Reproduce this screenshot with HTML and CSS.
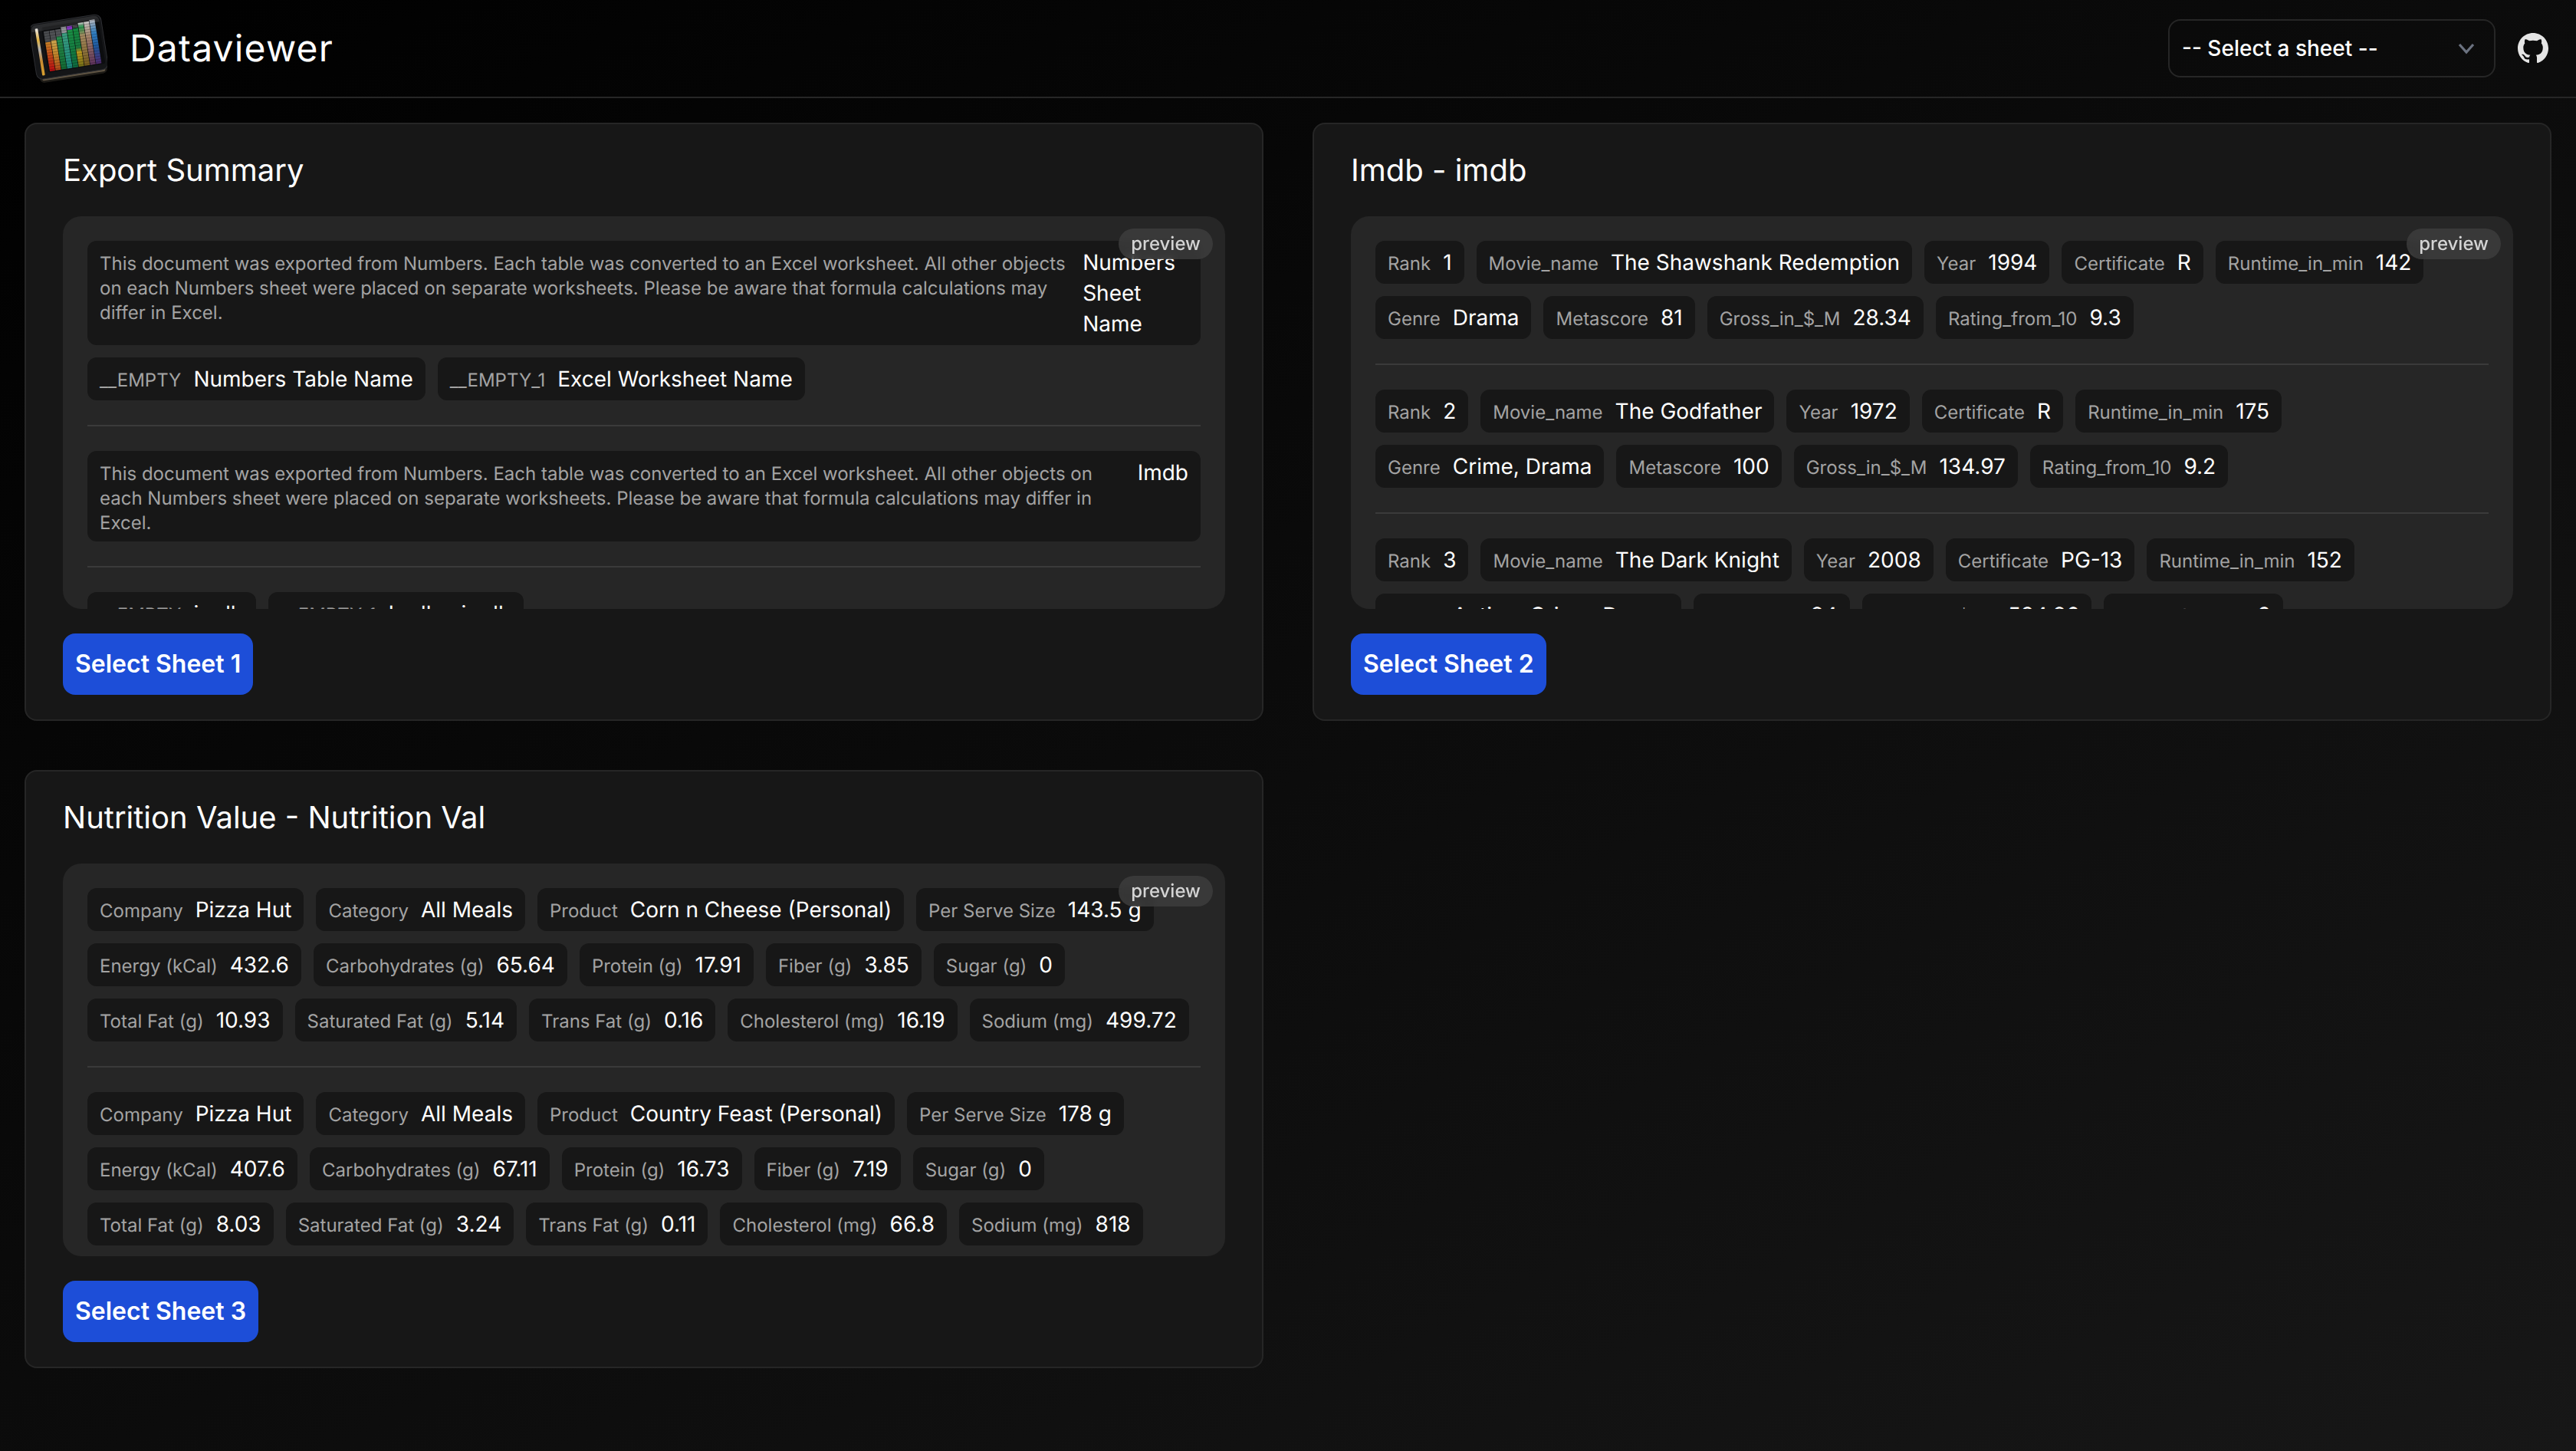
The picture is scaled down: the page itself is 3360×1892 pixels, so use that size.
FILE: index.html
```html
<!DOCTYPE html>
<html lang="en">
<head>
    <meta charset="UTF-8">
    <meta name="viewport" content="width=device-width, initial-scale=1.0">
    <title>Dataviewer</title>
    <link rel="stylesheet" href="styles.css">
</head>
<body>
    <header class="topbar">
        <div class="brand">
            <svg class="brand-logo" viewBox="30 20 300 280" aria-hidden="true">
                <defs>
                    <linearGradient id="c1" x1="0" y1="0" x2="0" y2="1"><stop offset="0" stop-color="#e8962c"/><stop offset=".45" stop-color="#e2561c"/><stop offset="1" stop-color="#d80f14"/></linearGradient>
                    <linearGradient id="c2" x1="0" y1="0" x2="0" y2="1"><stop offset="0" stop-color="#eec05a"/><stop offset=".5" stop-color="#e09a30"/><stop offset="1" stop-color="#c9501c"/></linearGradient>
                    <linearGradient id="c3" x1="0" y1="0" x2="0" y2="1"><stop offset="0" stop-color="#2fa55a"/><stop offset="1" stop-color="#157a3c"/></linearGradient>
                    <linearGradient id="c4" x1="0" y1="0" x2="0" y2="1"><stop offset="0" stop-color="#45b894"/><stop offset="1" stop-color="#1c9c8c"/></linearGradient>
                    <linearGradient id="c5" x1="0" y1="0" x2="0" y2="1"><stop offset="0" stop-color="#9a3fe0"/><stop offset=".08" stop-color="#9a3fe0"/><stop offset=".1" stop-color="#1fa850"/><stop offset="1" stop-color="#107a48"/></linearGradient>
                    <linearGradient id="c6" x1="0" y1="0" x2="0" y2="1"><stop offset="0" stop-color="#16a24a"/><stop offset=".5" stop-color="#1d8a48"/><stop offset=".62" stop-color="#d8b024"/><stop offset="1" stop-color="#87801c"/></linearGradient>
                    <linearGradient id="c7" x1="0" y1="0" x2="0" y2="1"><stop offset="0" stop-color="#d8d8d8"/><stop offset=".1" stop-color="#2eb05c"/><stop offset=".3" stop-color="#c0a070"/><stop offset="1" stop-color="#8a6a20"/></linearGradient>
                    <linearGradient id="c8" x1="0" y1="0" x2="0" y2="1"><stop offset="0" stop-color="#e0e0e0"/><stop offset=".35" stop-color="#c09878"/><stop offset="1" stop-color="#6c3a6c"/></linearGradient>
                    <linearGradient id="c9" x1="0" y1="0" x2="0" y2="1"><stop offset="0" stop-color="#c8ccd4"/><stop offset=".3" stop-color="#3a94e0"/><stop offset=".6" stop-color="#2468b8"/><stop offset="1" stop-color="#5c3080"/></linearGradient>
                    <linearGradient id="spine" x1="0" y1="0" x2="0" y2="1"><stop offset="0" stop-color="#e8e8e8"/><stop offset=".25" stop-color="#e0b040"/><stop offset=".45" stop-color="#b0b0b0"/><stop offset=".7" stop-color="#c88a30"/><stop offset="1" stop-color="#d8a030"/></linearGradient>
                    <pattern id="cells" width="4" height="11" patternUnits="userSpaceOnUse"><rect width="4" height="11" fill="#000" fill-opacity=".14"/><rect y="9" width="4" height="2" fill="#000" fill-opacity=".35"/></pattern>
                </defs>
                <g transform="rotate(-9 180 160)">
                    <rect x="48" y="225" width="268" height="52" rx="18" fill="#1c1a16"/>
                    <rect x="58" y="245" width="250" height="24" rx="6" fill="#5f5443"/>
                    <rect x="38" y="44" width="284" height="218" rx="24" fill="#141517" stroke="#2e2f33" stroke-width="3"/>
                    <rect x="86" y="60" width="226" height="180" rx="8" fill="#0c0d0f"/>
                    <rect x="60" y="62" width="11" height="186" rx="3" fill="url(#spine)"/>
                    <rect x="92" y="78" width="21" height="44" fill="#55575b"/>
                    <rect x="92" y="122" width="21" height="114" fill="url(#c1)"/>
                    <rect x="115" y="78" width="21" height="40" fill="#5c5e62"/>
                    <rect x="115" y="118" width="21" height="118" fill="url(#c2)"/>
                    <rect x="138" y="78" width="21" height="28" fill="#606266"/>
                    <rect x="138" y="106" width="21" height="130" fill="url(#c3)"/>
                    <rect x="161" y="72" width="21" height="24" fill="#a8aab0"/>
                    <rect x="161" y="96" width="21" height="140" fill="url(#c4)"/>
                    <rect x="184" y="72" width="21" height="164" fill="url(#c5)"/>
                    <rect x="207" y="72" width="21" height="10" fill="#55575b"/>
                    <rect x="207" y="84" width="21" height="152" fill="url(#c6)"/>
                    <rect x="230" y="66" width="21" height="170" fill="url(#c7)"/>
                    <rect x="253" y="66" width="21" height="170" fill="url(#c8)"/>
                    <rect x="276" y="62" width="21" height="174" fill="url(#c9)"/>
                    <rect x="92" y="62" width="205" height="174" fill="url(#cells)"/>
                    <path d="M46 66a18 18 0 0 1 18-18h232a18 18 0 0 1 18 18v8H46z" fill="#fff" fill-opacity=".1"/>
                </g>
            </svg>
            <h1 class="brand-name">Dataviewer</h1>
        </div>
        <div class="topbar-right">
            <div class="sheet-select">
                <select>
                    <option>-- Select a sheet --</option>
                </select>
                <svg class="sheet-select-arrow" viewBox="0 0 24 16" aria-hidden="true">
                    <path d="M3 3l9 10 9-10" fill="none" stroke="#6b7280" stroke-width="3.2"/>
                </svg>
            </div>
            <a class="github-link" href="#" aria-label="GitHub">
                <svg viewBox="0 0 16 16" aria-hidden="true">
                    <path fill="#e5e5e5" d="M8 0C3.58 0 0 3.58 0 8c0 3.54 2.29 6.53 5.47 7.59.4.07.55-.17.55-.38 0-.19-.01-.82-.01-1.49-2.01.37-2.53-.49-2.69-.94-.09-.23-.48-.94-.82-1.13-.28-.15-.68-.52-.01-.53.63-.01 1.08.58 1.23.82.72 1.21 1.87.87 2.33.66.07-.52.28-.87.51-1.07-1.78-.2-3.64-.89-3.64-3.95 0-.87.31-1.59.82-2.15-.08-.2-.36-1.02.08-2.12 0 0 .67-.21 2.2.82.64-.18 1.32-.27 2-.27.68 0 1.36.09 2 .27 1.53-1.04 2.2-.82 2.2-.82.44 1.1.16 1.92.08 2.12.51.56.82 1.27.82 2.15 0 3.07-1.87 3.75-3.65 3.95.29.25.54.73.54 1.48 0 1.07-.01 1.93-.01 2.2 0 .21.15.46.55.38A8.013 8.013 0 0016 8c0-4.42-3.58-8-8-8z"/>
                </svg>
            </a>
        </div>
    </header>

    <main class="sheet-grid">
        <section class="sheet-card">
            <h2 class="sheet-title">Export Summary</h2>
            <div class="preview">
                <span class="preview-tag">preview</span>
                <div class="record">
                    <div class="field"><span class="field-label">This document was exported from Numbers. Each table was converted to an Excel worksheet. All other objects on each Numbers sheet were placed on separate worksheets. Please be aware that formula calculations may differ in Excel.</span><span class="field-value">Numbers Sheet Name</span></div>
                    <div class="field"><span class="field-label">__EMPTY</span><span class="field-value">Numbers Table Name</span></div>
                    <div class="field"><span class="field-label">__EMPTY_1</span><span class="field-value">Excel Worksheet Name</span></div>
                </div>
                <div class="record">
                    <div class="field"><span class="field-label">This document was exported from Numbers. Each table was converted to an Excel worksheet. All other objects on each Numbers sheet were placed on separate worksheets. Please be aware that formula calculations may differ in Excel.</span><span class="field-value">Imdb</span></div>
                </div>
                <div class="record">
                    <div class="field"><span class="field-label">__EMPTY</span><span class="field-value">imdb</span></div>
                    <div class="field"><span class="field-label">__EMPTY_1</span><span class="field-value">Imdb - imdb</span></div>
                </div>
            </div>
            <button class="select-btn">Select Sheet 1</button>
        </section>

        <section class="sheet-card">
            <h2 class="sheet-title">Imdb - imdb</h2>
            <div class="preview">
                <span class="preview-tag">preview</span>
                <div class="record">
                    <div class="field"><span class="field-label">Rank</span><span class="field-value">1</span></div>
                    <div class="field"><span class="field-label">Movie_name</span><span class="field-value">The Shawshank Redemption</span></div>
                    <div class="field"><span class="field-label">Year</span><span class="field-value">1994</span></div>
                    <div class="field"><span class="field-label">Certificate</span><span class="field-value">R</span></div>
                    <div class="field"><span class="field-label">Runtime_in_min</span><span class="field-value">142</span></div>
                    <div class="field"><span class="field-label">Genre</span><span class="field-value">Drama</span></div>
                    <div class="field"><span class="field-label">Metascore</span><span class="field-value">81</span></div>
                    <div class="field"><span class="field-label">Gross_in_$_M</span><span class="field-value">28.34</span></div>
                    <div class="field"><span class="field-label">Rating_from_10</span><span class="field-value">9.3</span></div>
                </div>
                <div class="record">
                    <div class="field"><span class="field-label">Rank</span><span class="field-value">2</span></div>
                    <div class="field"><span class="field-label">Movie_name</span><span class="field-value">The Godfather</span></div>
                    <div class="field"><span class="field-label">Year</span><span class="field-value">1972</span></div>
                    <div class="field"><span class="field-label">Certificate</span><span class="field-value">R</span></div>
                    <div class="field"><span class="field-label">Runtime_in_min</span><span class="field-value">175</span></div>
                    <div class="field"><span class="field-label">Genre</span><span class="field-value">Crime, Drama</span></div>
                    <div class="field"><span class="field-label">Metascore</span><span class="field-value">100</span></div>
                    <div class="field"><span class="field-label">Gross_in_$_M</span><span class="field-value">134.97</span></div>
                    <div class="field"><span class="field-label">Rating_from_10</span><span class="field-value">9.2</span></div>
                </div>
                <div class="record">
                    <div class="field"><span class="field-label">Rank</span><span class="field-value">3</span></div>
                    <div class="field"><span class="field-label">Movie_name</span><span class="field-value">The Dark Knight</span></div>
                    <div class="field"><span class="field-label">Year</span><span class="field-value">2008</span></div>
                    <div class="field"><span class="field-label">Certificate</span><span class="field-value">PG-13</span></div>
                    <div class="field"><span class="field-label">Runtime_in_min</span><span class="field-value">152</span></div>
                    <div class="field"><span class="field-label">Genre</span><span class="field-value">Action, Crime, Drama</span></div>
                    <div class="field"><span class="field-label">Metascore</span><span class="field-value">84</span></div>
                    <div class="field"><span class="field-label">Gross_in_$_M</span><span class="field-value">534.86</span></div>
                    <div class="field"><span class="field-label">Rating_from_10</span><span class="field-value">9</span></div>
                </div>
            </div>
            <button class="select-btn">Select Sheet 2</button>
        </section>

        <section class="sheet-card">
            <h2 class="sheet-title">Nutrition Value - Nutrition Val</h2>
            <div class="preview">
                <span class="preview-tag">preview</span>
                <div class="record">
                    <div class="field"><span class="field-label">Company</span><span class="field-value">Pizza Hut</span></div>
                    <div class="field"><span class="field-label">Category</span><span class="field-value">All Meals</span></div>
                    <div class="field"><span class="field-label">Product</span><span class="field-value">Corn n Cheese (Personal)</span></div>
                    <div class="field"><span class="field-label">Per Serve Size</span><span class="field-value">143.5 g</span></div>
                    <div class="field"><span class="field-label">Energy (kCal)</span><span class="field-value">432.6</span></div>
                    <div class="field"><span class="field-label">Carbohydrates (g)</span><span class="field-value">65.64</span></div>
                    <div class="field"><span class="field-label">Protein (g)</span><span class="field-value">17.91</span></div>
                    <div class="field"><span class="field-label">Fiber (g)</span><span class="field-value">3.85</span></div>
                    <div class="field"><span class="field-label">Sugar (g)</span><span class="field-value">0</span></div>
                    <div class="field"><span class="field-label">Total Fat (g)</span><span class="field-value">10.93</span></div>
                    <div class="field"><span class="field-label">Saturated Fat (g)</span><span class="field-value">5.14</span></div>
                    <div class="field"><span class="field-label">Trans Fat (g)</span><span class="field-value">0.16</span></div>
                    <div class="field"><span class="field-label">Cholesterol (mg)</span><span class="field-value">16.19</span></div>
                    <div class="field"><span class="field-label">Sodium (mg)</span><span class="field-value">499.72</span></div>
                </div>
                <div class="record">
                    <div class="field"><span class="field-label">Company</span><span class="field-value">Pizza Hut</span></div>
                    <div class="field"><span class="field-label">Category</span><span class="field-value">All Meals</span></div>
                    <div class="field"><span class="field-label">Product</span><span class="field-value">Country Feast (Personal)</span></div>
                    <div class="field"><span class="field-label">Per Serve Size</span><span class="field-value">178 g</span></div>
                    <div class="field"><span class="field-label">Energy (kCal)</span><span class="field-value">407.6</span></div>
                    <div class="field"><span class="field-label">Carbohydrates (g)</span><span class="field-value">67.11</span></div>
                    <div class="field"><span class="field-label">Protein (g)</span><span class="field-value">16.73</span></div>
                    <div class="field"><span class="field-label">Fiber (g)</span><span class="field-value">7.19</span></div>
                    <div class="field"><span class="field-label">Sugar (g)</span><span class="field-value">0</span></div>
                    <div class="field"><span class="field-label">Total Fat (g)</span><span class="field-value">8.03</span></div>
                    <div class="field"><span class="field-label">Saturated Fat (g)</span><span class="field-value">3.24</span></div>
                    <div class="field"><span class="field-label">Trans Fat (g)</span><span class="field-value">0.11</span></div>
                    <div class="field"><span class="field-label">Cholesterol (mg)</span><span class="field-value">66.8</span></div>
                    <div class="field"><span class="field-label">Sodium (mg)</span><span class="field-value">818</span></div>
                </div>
            </div>
            <button class="select-btn">Select Sheet 3</button>
        </section>
    </main>
</body>
</html>
```
FILE: styles.css
```css
* {
    box-sizing: border-box;
}
html, body {
    margin: 0;
    padding: 0;
}
body {
    font-family: Inter, "Liberation Sans", sans-serif;
    text-rendering: geometricPrecision;
    min-height: 1892px;
    background: linear-gradient(to bottom right, #000, #171717);
    color: #fff;
}
.topbar {
    display: flex;
    justify-content: space-between;
    align-items: center;
    height: 128px;
    padding: 0 36px 0 40px;
    border-bottom: 2px solid #262626;
}
.brand {
    display: flex;
    align-items: center;
    gap: 29px;
}
.brand-logo {
    width: 100px;
    height: 93px;
}
.brand-name {
    margin: 0;
    font-size: 48px;
    line-height: 64px;
    font-weight: 400;
    letter-spacing: 1.2px;
}
.topbar-right {
    display: flex;
    align-items: center;
    gap: 29px;
}
.sheet-select {
    position: relative;
    width: 427px;
    height: 76px;
}
.sheet-select select {
    width: 100%;
    height: 100%;
    padding: 0 16px;
    appearance: none;
    background: transparent;
    border: 2px solid #262626;
    border-radius: 16px;
    color: #fff;
    font-family: inherit;
    font-size: 28px;
    font-weight: 500;
}
.sheet-select-arrow {
    position: absolute;
    top: 30px;
    right: 26px;
    width: 24px;
    height: 16px;
}
.github-link {
    display: block;
    width: 40px;
    height: 40px;
}
.github-link svg {
    display: block;
    width: 40px;
    height: 40px;
}
.sheet-grid {
    display: grid;
    grid-template-columns: 1fr 1fr;
    align-items: start;
    gap: 64px;
    padding: 32px;
}
.sheet-card {
    padding: 32px 48px;
    background-color: #171717;
    border: 2px solid #262626;
    border-radius: 16px;
}
.sheet-title {
    margin: 0 0 32px;
    font-size: 40px;
    line-height: 56px;
    font-weight: 400;
}
.preview {
    position: relative;
    height: 512px;
    padding: 32px;
    overflow: hidden;
    background-color: #262626;
    border-radius: 24px;
}
.preview-tag {
    position: absolute;
    top: 16px;
    right: 16px;
    padding: 4px 16px;
    font-size: 24px;
    line-height: 32px;
    font-weight: 500;
    color: #d4d4d4;
    background-color: rgba(64, 64, 64, 0.75);
    border-radius: 20px;
    backdrop-filter: blur(4px);
}
.record {
    display: flex;
    flex-wrap: wrap;
    gap: 16px;
    padding-bottom: 32px;
    margin-bottom: 32px;
    border-bottom: 2px solid #3a3a3a;
}
.record:last-of-type {
    border-bottom: none;
}
.field {
    display: flex;
    align-items: baseline;
    gap: 16px;
    padding: 8px 16px;
    background-color: #171717;
    border-radius: 12px;
}
.field-label {
    font-size: 24px;
    line-height: 32px;
    color: #a3a3a3;
}
.field-value {
    font-size: 28px;
    line-height: 40px;
    color: #fff;
}
.select-btn {
    display: block;
    margin-top: 32px;
    padding: 16px;
    background-color: #1d4ed8;
    border: none;
    border-radius: 16px;
    color: #fff;
    font-family: inherit;
    font-size: 32px;
    line-height: 48px;
    font-weight: 600;
    cursor: pointer;
}
```
